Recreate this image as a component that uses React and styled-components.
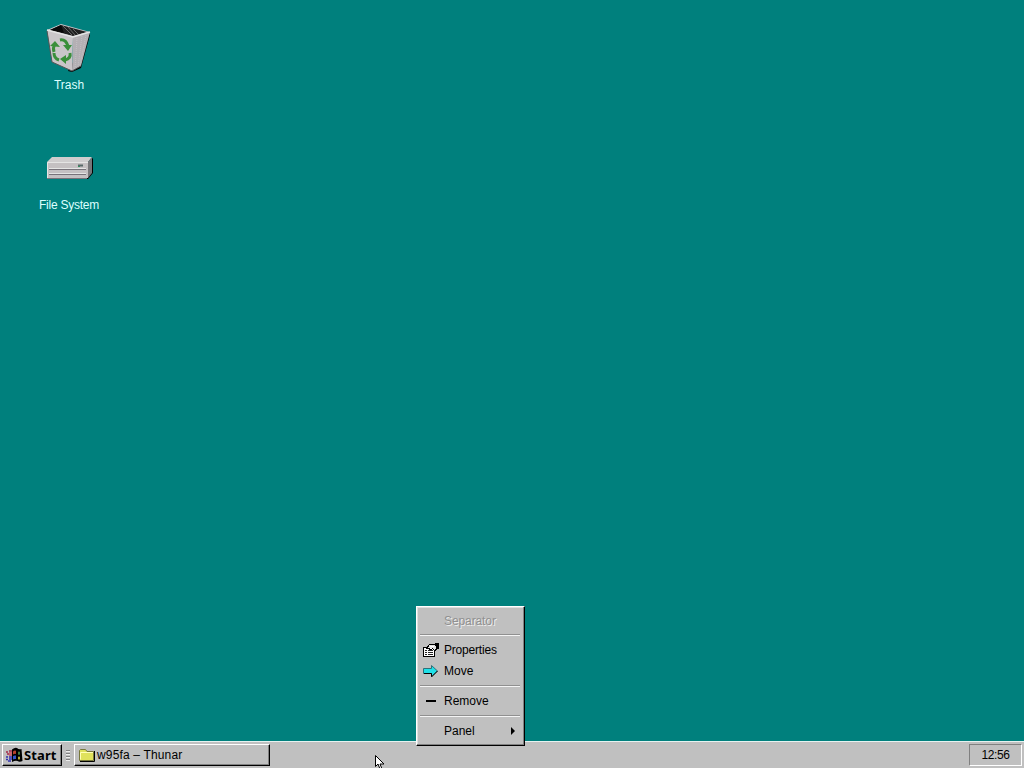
import React from "react";
import styled, { createGlobalStyle, css } from "styled-components";

const GlobalStyle = createGlobalStyle`
  * {
    box-sizing: border-box;
  }
  body {
    margin: 0;
    overflow: hidden;
    font-family: "Liberation Sans", Arial, sans-serif;
    font-size: 12px;
    color: #000;
    cursor: default;
  }
  svg {
    display: block;
    flex-shrink: 0;
  }
`;

const raised = css`
  border: 1px solid;
  border-color: #fff #000 #000 #fff;
  box-shadow: inset -1px -1px 0 #808080;
`;

const Screen = styled.div`
  position: relative;
  display: flex;
  flex-direction: column;
  width: 1024px;
  height: 768px;
  overflow: hidden;
  background: #00807d;
`;

const Desktop = styled.main`
  flex: 1;
  display: flex;
  flex-direction: column;
  align-items: flex-start;
  padding: 20px 0 0 19px;
`;

const Shortcut = styled.div`
  display: flex;
  flex-direction: column;
  align-items: center;
  width: 100px;
  height: 120px;
`;

const ShortcutLabel = styled.span`
  margin-top: 2px;
  line-height: 16px;
  color: #dff;
  letter-spacing: ${(p) => p.$spacing || "0"};
`;

const Taskbar = styled.footer`
  display: flex;
  align-items: flex-start;
  height: 27px;
  padding: 2px 2px 0;
  background: #c0c0c0;
  border-top: 1px solid #e6f2f0;
`;

const StartButton = styled.div`
  ${raised}
  display: flex;
  align-items: center;
  width: 60px;
  height: 22px;
  padding-left: 3px;
  font: bold 13px "Noto Sans", sans-serif;
`;

const StartText = styled.span`
  margin-left: 1px;
  line-height: 18px;
  letter-spacing: 0.1px;
`;

const Handle = styled.div`
  display: flex;
  flex-direction: column;
  gap: 2px;
  margin: 6px 4px 0;
`;

const Grip = styled.i`
  width: 4px;
  height: 1px;
  background: #808080;
  box-shadow: 0 1px 0 #eee;
`;

const TaskButton = styled.div`
  ${raised}
  display: flex;
  align-items: center;
  width: 196px;
  height: 22px;
  padding-left: 3px;
`;

const TaskText = styled.span`
  margin: -1px 0 0 2px;
  letter-spacing: 0.16px;
`;

const Tray = styled.div`
  width: 53px;
  height: 22px;
  margin-left: auto;
  border: 1px solid;
  border-color: #808080 #fff #fff #808080;
  line-height: 20px;
  text-align: center;
  letter-spacing: -0.45px;
`;

const Menu = styled.div`
  position: absolute;
  left: 416px;
  top: 606px;
  width: 109px;
  height: 140px;
  padding: 3px 3px 0;
  background: #c0c0c0;
  border: 1px solid;
  border-color: #fff #000 #000 #fff;
  box-shadow: inset -1px -1px 0 #808080, inset 1px 1px 0 #dfdfdf;
`;

const MenuItem = styled.div`
  display: flex;
  align-items: center;
  height: 21px;
  padding: 0 4px 0 2px;
  letter-spacing: ${(p) => p.$spacing || "0"};
  ${(p) =>
    p.$disabled &&
    css`
      color: #909090;
      text-shadow: 1px 1px 0 #eee;
    `}
`;

const MenuIcon = styled.span`
  width: 22px;
`;

const Arrow = styled.span`
  margin-left: auto;
`;

const MenuLine = styled.div`
  height: 2px;
  margin: ${(p) => (p.$first ? "3px 1px 3px 0" : "4px 1px 3px 0")};
  background: #f4f4f4;
  border-top: 1px solid #909090;
`;

const Pointer = styled.div`
  position: absolute;
  left: 375px;
  top: 755px;
`;

const TrashIcon = () => (
  <svg width="48" height="55" viewBox="0 0 48 55">
    <path d="M44 13l1 2-9 33-9 4-4-1z" fill="#000" />
    <path d="M2 10L16 4l29 8-17 5z" fill="#c8c4c8" />
    <path d="M5 10L16 5l26 7-14 4z" fill="#202020" />
    <path d="M16 5l3 8-14-3z" fill="#080808" />
    <path d="M18 6l9 9M23 7l7 8M28 9l5 5" stroke="#666" />
    <path d="M2 10l26 7-1 34-20-9z" fill="#cac6c9" />
    <path d="M28 17l17-5-9 34-9 5z" fill="#b4b0b4" />
    <path d="M32 18l-2 31M37 16l-4 31M41 15l-6 30" stroke="#c5c1c5" strokeDasharray="1 1" />
    <path d="M2 10l26 7 17-5" fill="none" stroke="#e4e4e4" strokeWidth="1.5" />
    <path d="M2 11l5 31 20 9 9-5" fill="none" stroke="#555" />
    <g fill="none" stroke="#3a8f3a" strokeWidth="3">
      <path d="M9 33c0 4 2 6 5 7" />
      <path d="M15 20c5-1 7 3 8 6" />
      <path d="M25 33c1 4-1 6-5 7" />
      <path d="M9 32c-1-3-1-5 1-8" />
    </g>
    <path d="M5 26l5-5 5 6zM18 25h9l-4 6zM21 35v9l-6-5z" fill="#3a8f3a" />
  </svg>
);

const DriveIcon = () => (
  <svg width="48" height="55" viewBox="0 0 48 55">
    <path d="M43 22l5-4v15l-5 6H5v-2h38z" fill="#000" />
    <path d="M2 22l5-5h40l-4 5z" fill="#cfcdce" />
    <path d="M43 22l4-5v16l-4 5z" fill="#77777a" />
    <path d="M2 22h41v16H2z" fill="#c4c0c2" />
    <path d="M2.500 38V22.500H43" fill="none" stroke="#e4e4e4" />
    <path d="M4 28.500h37M4 33.500h37" stroke="#e4e4e4" />
    <path d="M4 29.500h37M4 34.500h37M2 38.500h40" stroke="#77727a" />
    <path d="M33 25.500h5" stroke="#586868" strokeWidth="2" />
    <path d="M33 26.500h2" stroke="#309060" />
  </svg>
);

const WindowsLogo = () => (
  <svg width="17" height="16" viewBox="0 0 17 16">
    <path d="M6 2.500q3-2.500 5-1.500 2 2 4.500 1l1 12q-3 1.500-5 0-2-1-5.500 1z" fill="#000" />
    <path d="M7 4.500Q8.500 3 10 3.800V7Q8.500 6.500 7 7.500z" fill="#b8402c" />
    <path d="M12 4.500q1 .7 2 0v3Q13 8 12 7.500z" fill="#407a44" />
    <path d="M7 9q1.500-1 3-.4v3.500Q8.500 11.500 7 12.500z" fill="#3254c8" />
    <path d="M12 9.500q1 .7 2 0v2.700q-1 .7-2 0z" fill="#b8a838" />
    <path d="M0 5h2M3 4h3M1 7h2" stroke="#a02848" strokeWidth="1.500" />
    <path d="M3 6h3M3 8h3" stroke="#c84858" strokeWidth="1.500" />
    <path d="M0 10h2M3 10h3M0 12.500h2M3 12h3M2 14h3" stroke="#3030b0" strokeWidth="1.500" />
  </svg>
);

const FolderIcon = () => (
  <svg width="17" height="16" viewBox="0 0 17 16">
    <path d="M2 14.500h14.500V4" fill="none" stroke="#000" />
    <path d="M1.500 13.500v-10l1-1h5l1.500 2h6.500v9z" fill="#e0e25c" stroke="#77773a" />
    <path d="M2.500 12.500v-7H15" fill="none" stroke="#ffffb8" />
  </svg>
);

const PropertiesIcon = () => (
  <svg width="17" height="16" viewBox="0 0 17 16" shapeRendering="crispEdges">
    <path d="M1.500 5.500h11v9h-11z" fill="#fff" stroke="#000" />
    <path d="M3 8.500h2M6 8.500h5M3 10.500h2M6 10.500h5M3 12.500h2M6 12.500h5" stroke="#222" />
    <path d="M4.500 6.500l3-4h5l2 2v3l-2 1-2-2-2 1-2-1z" fill="#e4e4e4" stroke="#000" />
    <path d="M8 4.500h4M8 6.500h2" stroke="#fff" />
    <path d="M13 1h4v6h-2V4h-2z" fill="#000" />
  </svg>
);

const MoveIcon = () => (
  <svg width="17" height="16" viewBox="0 0 17 16">
    <path d="M1.500 5.500h8v-3L15.500 8l-6 5.500v-3h-8z" fill="#20e0e8" stroke="#307078" />
    <path d="M9.500 14l6-6M2 10.500h7.500v3" fill="none" stroke="#000" />
  </svg>
);

const RemoveIcon = () => (
  <svg width="17" height="16" viewBox="0 0 17 16">
    <path d="M4 7h10v2H4z" />
  </svg>
);

export default function App() {
  return (
    <>
      <GlobalStyle />
      <Screen>
        <Desktop>
          <Shortcut>
            <TrashIcon />
            <ShortcutLabel>Trash</ShortcutLabel>
          </Shortcut>
          <Shortcut>
            <DriveIcon />
            <ShortcutLabel $spacing="-0.25px">File System</ShortcutLabel>
          </Shortcut>
        </Desktop>
        <Taskbar>
          <StartButton>
            <WindowsLogo />
            <StartText>Start</StartText>
          </StartButton>
          <Handle>
            <Grip />
            <Grip />
            <Grip />
            <Grip />
          </Handle>
          <TaskButton>
            <FolderIcon />
            <TaskText>w95fa – Thunar</TaskText>
          </TaskButton>
          <Tray>12:56</Tray>
        </Taskbar>
        <Menu>
          <MenuItem $disabled $spacing="-0.1px">
            <MenuIcon />
            Separator
          </MenuItem>
          <MenuLine $first />
          <MenuItem $spacing="-0.2px">
            <MenuIcon>
              <PropertiesIcon />
            </MenuIcon>
            Properties
          </MenuItem>
          <MenuItem>
            <MenuIcon>
              <MoveIcon />
            </MenuIcon>
            Move
          </MenuItem>
          <MenuLine />
          <MenuItem>
            <MenuIcon>
              <RemoveIcon />
            </MenuIcon>
            Remove
          </MenuItem>
          <MenuLine />
          <MenuItem>
            <MenuIcon />
            Panel
            <Arrow>
              <svg width="8" height="8" viewBox="0 0 8 8">
                <path d="M2 0l4 4-4 4z" />
              </svg>
            </Arrow>
          </MenuItem>
        </Menu>
        <Pointer>
          <svg width="12" height="18" viewBox="0 0 12 18">
            <path d="M.5.500v11l2.500-2.500 2 5h2l-2-5h4z" fill="#fff" stroke="#000" />
          </svg>
        </Pointer>
      </Screen>
    </>
  );
}
